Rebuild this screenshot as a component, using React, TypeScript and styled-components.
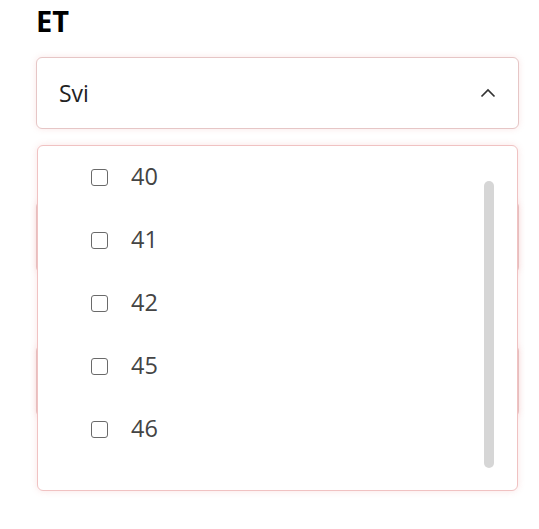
import React from "react";
import styled, { createGlobalStyle } from "styled-components";

const Global = createGlobalStyle`
  html, body { margin: 0; padding: 0; background: #fff; min-height: 100%; }
  body { font-family: "Open Sans", "Noto Sans", sans-serif; }
  #root { min-height: 529px; }
`;

const Page = styled.div`
  padding: 2px 20px 0 36px;
  width: 483px;
  min-height: 527px;
`;

const Field = styled.div`
  position: relative;
  margin-bottom: 17px;
`;

const Label = styled.div`
  font-size: 29px;
  font-weight: 700;
  line-height: 38px;
  color: #000;
  height: 38px;
  margin-bottom: 17px;
`;

const SelectBox = styled.div`
  box-sizing: border-box;
  height: 72px;
  border: 1px solid #e6c6c6;
  border-radius: 6px;
  box-shadow: 0 0 6px rgba(225, 120, 120, 0.18);
  background: #fff;
  display: flex;
  align-items: center;
  justify-content: space-between;
  padding: 0 22px 0 22px;
  font-size: 23px;
  color: #222;
`;

const Anchor = styled.div`
  position: relative;
`;

const Popup = styled.div`
  position: absolute;
  top: calc(100% + 16px);
  left: 1px;
  right: 1px;
  box-sizing: border-box;
  height: 346px;
  background: #fff;
  border: 1px solid #f0c2c2;
  border-radius: 6px;
  box-shadow: 0 0 7px rgba(230, 120, 120, 0.2);
  z-index: 10;
  overflow: hidden;
`;

const List = styled.ul`
  list-style: none;
  margin: 0;
  padding: 0;
  transform: translateY(-2px);
`;

const Row = styled.li`
  height: 63px;
  display: flex;
  align-items: center;
  padding-left: 53px;
  gap: 23px;
  font-size: 23.5px;
  color: #444;
`;

const Check = styled.span`
  box-sizing: border-box;
  width: 17px;
  height: 17px;
  margin-top: 3px;
  border: 1.5px solid #6a6a6a;
  border-radius: 3px;
  flex: none;
`;

const Scroll = styled.div`
  position: absolute;
  top: 35px;
  right: 23px;
  width: 10px;
  height: 287px;
  border-radius: 5px;
  background: #d6d6d6;
`;

const Chevron = () => (
  <svg width="16" height="10" viewBox="0 0 16 10" fill="none">
    <path d="M1.5 8.5 L8 2 L14.5 8.5" stroke="#333" strokeWidth="1.7" />
  </svg>
);

const options = ["40", "41", "42", "45", "46"];

export default function App() {
  return (
    <>
      <Global />
      <Page>
        <Field>
          <Label>ET</Label>
          <Anchor>
            <SelectBox>
              <span>Svi</span>
              <Chevron />
            </SelectBox>
            <Popup>
              <List>
                {options.map((o) => (
                  <Row key={o}>
                    <Check />
                    <span>{o}</span>
                  </Row>
                ))}
              </List>
              <Scroll />
            </Popup>
          </Anchor>
        </Field>
        <Field>
          <Label />
          <SelectBox />
        </Field>
        <Field>
          <Label />
          <SelectBox />
        </Field>
      </Page>
    </>
  );
}
